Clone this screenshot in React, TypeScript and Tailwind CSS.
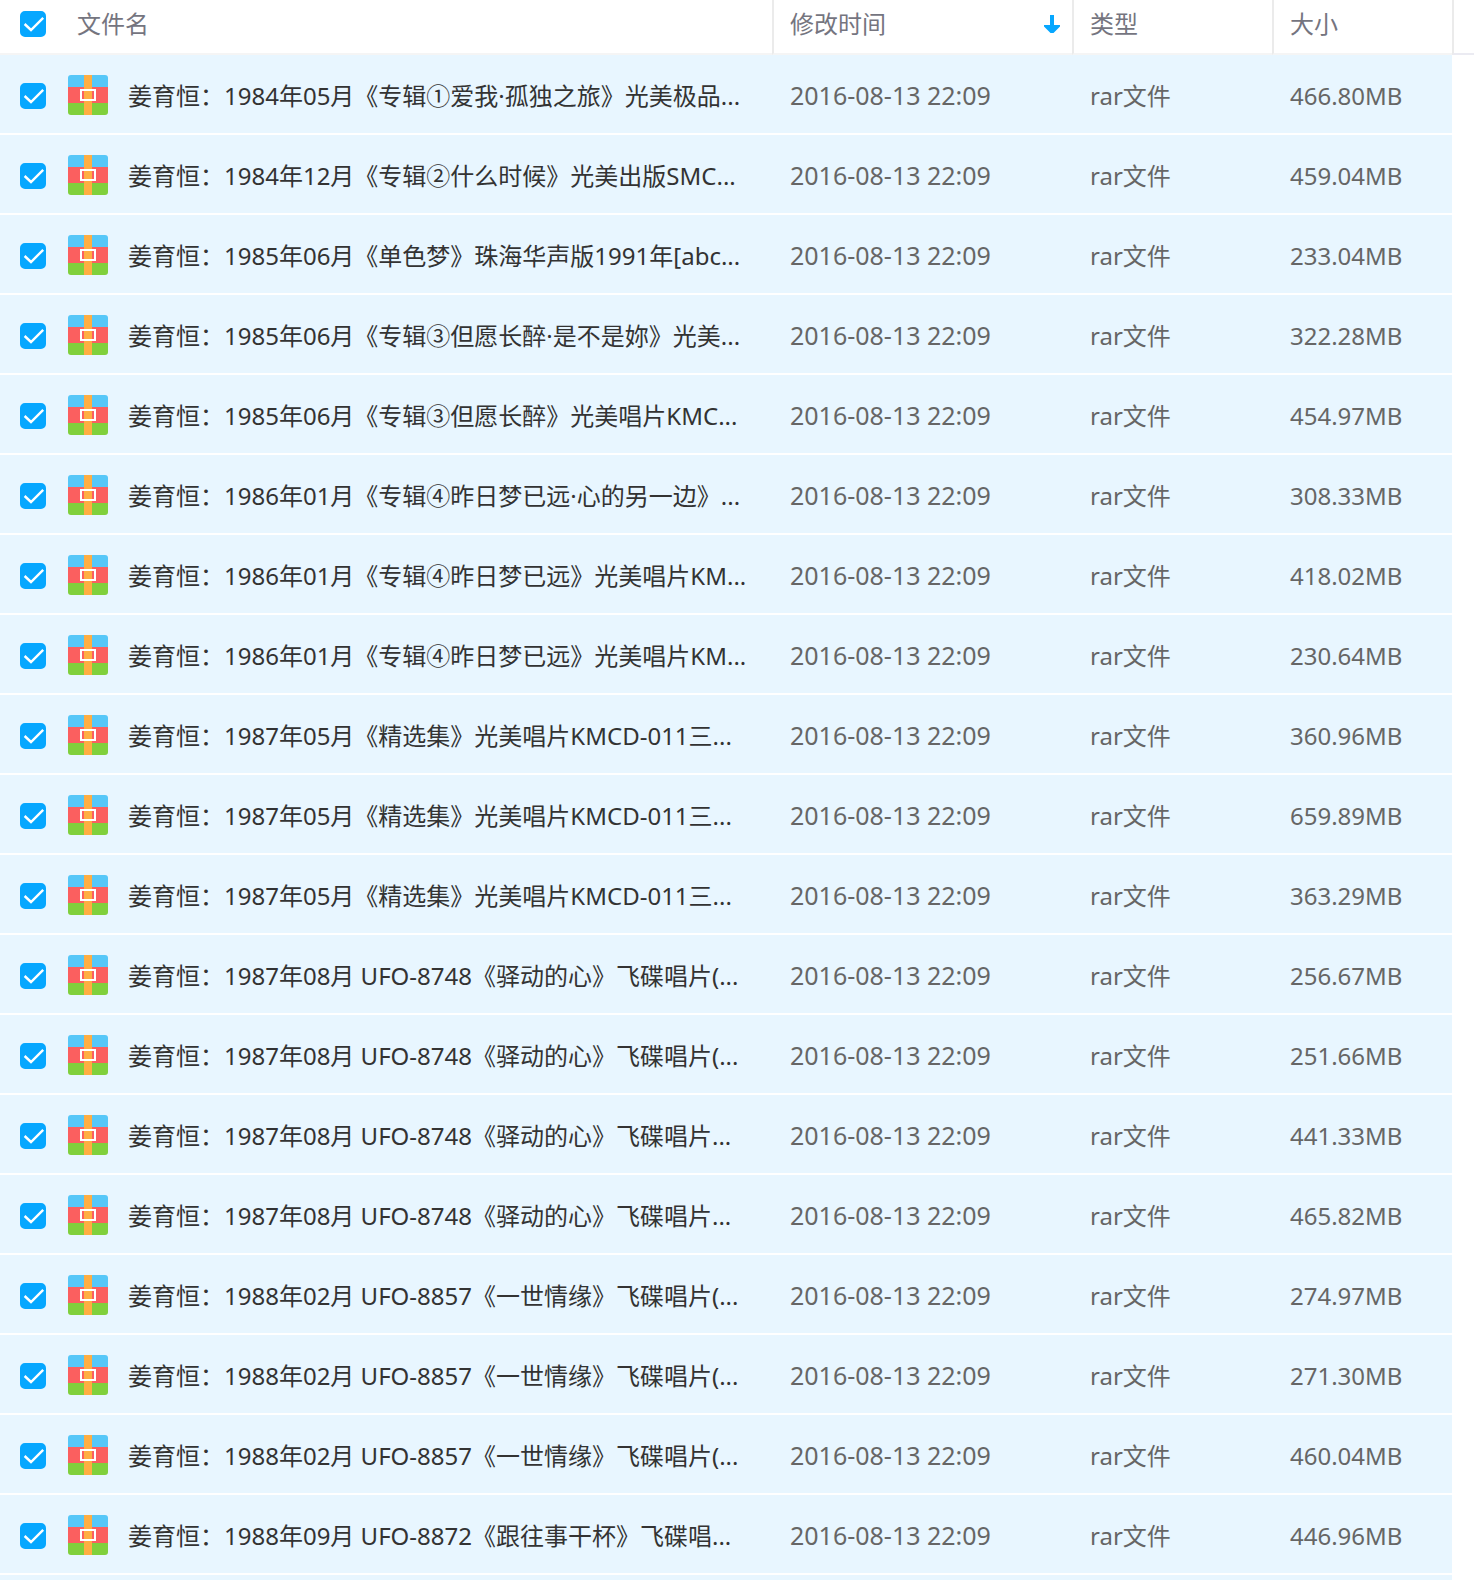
import { useState } from "react";

const MODIFIED = "2016-08-13 22:09";

const files = [
  { name: "姜育恒：1984年05月《专辑①爱我·孤独之旅》光美极品...", size: "466.80MB" },
  { name: "姜育恒：1984年12月《专辑②什么时候》光美出版SMC...", size: "459.04MB" },
  { name: "姜育恒：1985年06月《单色梦》珠海华声版1991年[abc...", size: "233.04MB" },
  { name: "姜育恒：1985年06月《专辑③但愿长醉·是不是妳》光美...", size: "322.28MB" },
  { name: "姜育恒：1985年06月《专辑③但愿长醉》光美唱片KMC...", size: "454.97MB" },
  { name: "姜育恒：1986年01月《专辑④昨日梦已远·心的另一边》...", size: "308.33MB" },
  { name: "姜育恒：1986年01月《专辑④昨日梦已远》光美唱片KM...", size: "418.02MB" },
  { name: "姜育恒：1986年01月《专辑④昨日梦已远》光美唱片KM...", size: "230.64MB" },
  { name: "姜育恒：1987年05月《精选集》光美唱片KMCD-011三...", size: "360.96MB" },
  { name: "姜育恒：1987年05月《精选集》光美唱片KMCD-011三...", size: "659.89MB" },
  { name: "姜育恒：1987年05月《精选集》光美唱片KMCD-011三...", size: "363.29MB" },
  { name: "姜育恒：1987年08月 UFO-8748《驿动的心》飞碟唱片(...", size: "256.67MB" },
  { name: "姜育恒：1987年08月 UFO-8748《驿动的心》飞碟唱片(...", size: "251.66MB" },
  { name: "姜育恒：1987年08月 UFO-8748《驿动的心》飞碟唱片...", size: "441.33MB" },
  { name: "姜育恒：1987年08月 UFO-8748《驿动的心》飞碟唱片...", size: "465.82MB" },
  { name: "姜育恒：1988年02月 UFO-8857《一世情缘》飞碟唱片(...", size: "274.97MB" },
  { name: "姜育恒：1988年02月 UFO-8857《一世情缘》飞碟唱片(...", size: "271.30MB" },
  { name: "姜育恒：1988年02月 UFO-8857《一世情缘》飞碟唱片(...", size: "460.04MB" },
  { name: "姜育恒：1988年09月 UFO-8872《跟往事干杯》飞碟唱...", size: "446.96MB" },
];

type CheckboxProps = {
  id: string;
  label?: string;
  checked: boolean;
  onChange: () => void;
};

const Checkbox = ({ id, label, checked, onChange }: CheckboxProps) => (
  <span className="grid shrink-0">
    <input
      id={id}
      type="checkbox"
      aria-label={label}
      checked={checked}
      onChange={onChange}
      className="peer col-start-1 row-start-1 size-[26px] appearance-none rounded-[5px] border-2 border-[#c4d8e6] bg-white checked:border-[#06a7ff] checked:bg-[#06a7ff]"
    />
    <svg
      viewBox="0 0 26 26"
      className="pointer-events-none invisible col-start-1 row-start-1 size-[26px] peer-checked:visible"
      fill="none"
      stroke="#fff"
      strokeWidth="2.4"
    >
      <path d="M4.600 13 L11 19 L23.200 6.800" />
    </svg>
  </span>
);

const ArchiveIcon = () => (
  <svg viewBox="0 0 40 40" className="mb-0.5 size-10 shrink-0" aria-hidden="true">
    <path d="M0 12V3a3 3 0 0 1 3-3h34a3 3 0 0 1 3 3v9z" fill="#56c7f8" />
    <path d="M0 12h40v16H0z" fill="#fb5f5f" />
    <path d="M0 28h40v9a3 3 0 0 1-3 3H3a3 3 0 0 1-3-3z" fill="#80d03c" />
    <path d="M16 0h8v40h-8z" fill="#ffae42" />
    <path d="M13 15h14v10H13z" fill="none" stroke="#fff" strokeWidth="2" />
  </svg>
);

const App = () => {
  const [selected, setSelected] = useState(files.map(() => true));
  const allSelected = selected.every(Boolean);

  const toggle = (index: number) =>
    setSelected(selected.map((on, i) => (i === index ? !on : on)));

  return (
    <main className="flex min-h-screen flex-col bg-white font-['Noto_Sans','Noto_Sans_CJK_SC',sans-serif] text-2xl text-[#666]">
      <table className="w-full table-fixed border-separate border-spacing-0 whitespace-nowrap text-left">
        <colgroup>
          <col />
          <col className="w-[300px]" />
          <col className="w-[200px]" />
          <col className="w-[180px]" />
          <col className="w-[22px]" />
        </colgroup>
        <thead className="text-[#75757f]">
          <tr className="h-[55px]">
            <th className="border-b-2 border-[#f5f5f5] p-0 pb-1.5 pl-5 font-normal">
              <div className="flex items-center gap-[31px]">
                <Checkbox
                  id="all"
                  label="全选"
                  checked={allSelected}
                  onChange={() => setSelected(files.map(() => !allSelected))}
                />
                文件名
              </div>
            </th>
            <th className="border-b-2 border-l-2 border-b-[#f5f5f5] border-l-[#ebebeb] p-0 pb-1.5 pl-4 pr-3 font-normal">
              <button type="button" className="flex w-full items-center justify-between">
                修改时间
                <svg viewBox="0 0 16 18" className="h-[18px] w-4" fill="#06a7ff" aria-hidden="true">
                  <path d="M6 0h4v10h6v1.500L9.500 18h-3L0 11.500V10h6z" />
                </svg>
              </button>
            </th>
            <th className="border-b-2 border-l-2 border-b-[#f5f5f5] border-l-[#ebebeb] p-0 pb-1.5 pl-4 font-normal">
              类型
            </th>
            <th className="border-b-2 border-l-2 border-b-[#f5f5f5] border-l-[#ebebeb] p-0 pb-1.5 pl-4 font-normal">
              大小
            </th>
            <td className="border-b-2 border-l-2 border-b-[#ebebf2] border-l-[#ebebeb] p-0" />
          </tr>
        </thead>
        <tbody>
          {files.map((file, i) => (
            <tr key={i} className="h-20">
              <td className="overflow-hidden border-b-2 border-white bg-[#e8f6ff] p-0 pl-5 pt-1">
                <div className="flex items-center">
                  <Checkbox id={`file-${i}`} checked={selected[i]} onChange={() => toggle(i)} />
                  <label htmlFor={`file-${i}`} className="ml-[22px] flex items-center gap-5 text-[#333]">
                    <ArchiveIcon />
                    {file.name}
                  </label>
                </div>
              </td>
              <td className="border-b-2 border-white bg-[#e8f6ff] p-0 pl-[18px] pt-1 text-[25px]">
                {MODIFIED}
              </td>
              <td className="border-b-2 border-white bg-[#e8f6ff] p-0 pl-[18px] pt-1">rar文件</td>
              <td className="border-b-2 border-white bg-[#e8f6ff] p-0 pl-[18px] pt-1">{file.size}</td>
            </tr>
          ))}
        </tbody>
      </table>
      <div className="mr-[22px] flex-1 bg-[#e8f6ff]" />
    </main>
  );
};

export default App;
